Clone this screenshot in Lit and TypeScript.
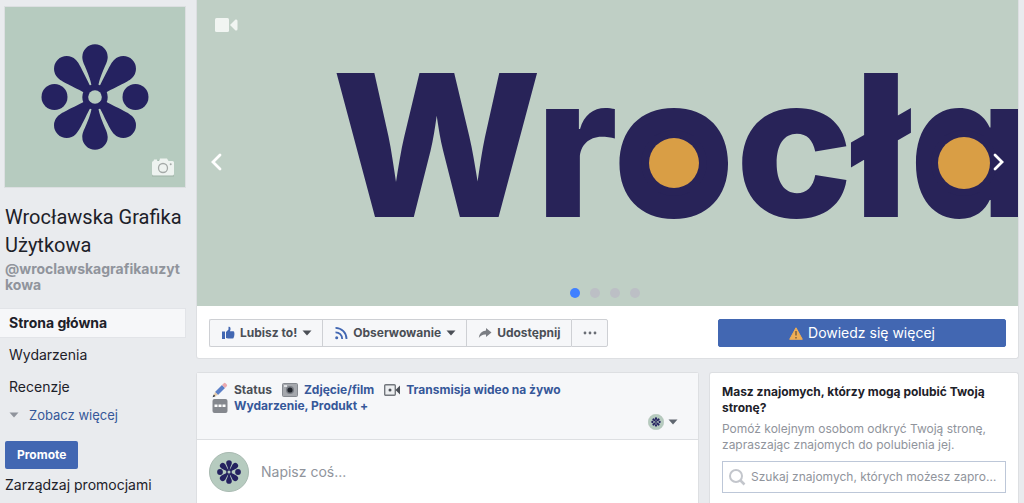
import { LitElement, html, css, svg } from "lit";
import { customElement } from "lit/decorators.js";

const PETAL = "M-12.7-40A12.7 12.7 0 0 1 12.7-40C12.7-33 6.500-27 3-10H-3C-6.500-27-12.7-33-12.7-40Z";
const SIDE_PETAL = "M-12.7-40A12.7 12.7 0 0 1 12.7-40C12.7-34 10-29 3.800-9H-3.800C-10-29-12.7-34-12.7-40Z";

const flower = svg`
  <g fill="#252260">
    <path d=${PETAL}></path>
    <path d=${PETAL} transform="rotate(180)"></path>
    <path d=${SIDE_PETAL} transform="rotate(45)"></path>
    <path d=${SIDE_PETAL} transform="rotate(135)"></path>
    <path d=${SIDE_PETAL} transform="rotate(225)"></path>
    <path d=${SIDE_PETAL} transform="rotate(315)"></path>
    <circle cx="-40.5" cy="0" r="13"></circle>
    <circle cx="40.5" cy="0" r="13"></circle>
    <circle cx="0" cy="0" r="12.7"></circle>
  </g>
  <circle cx="0" cy="0" r="6.8" fill="#b6cbbf"></circle>`;

const caret = html`<svg class="caret" width="10" height="6" viewBox="0 0 10 6" aria-hidden="true">
  <path d="M.5.5h9L5 5.500z" fill="currentColor"></path>
</svg>`;

@customElement("app-root")
export class AppRoot extends LitElement {
  static styles = css`
    :host {
      display: block;
      font-family: Inter, "Liberation Sans", sans-serif;
      font-size: 12px;
      line-height: 16px;
      color: #1d2129;
      background: #e9ebee;
      overflow: hidden;
    }
    * { box-sizing: border-box; }
    a { color: inherit; text-decoration: none; }
    button, input { font: inherit; color: inherit; margin: 0; }
    button { cursor: pointer; white-space: nowrap; }
    h1, h2, p { margin: 0; font-size: inherit; font-weight: inherit; }
    svg { display: block; flex: none; }
    .page { display: grid; grid-template-columns: 186px minmax(0, 1fr); gap: 10px; min-height: 100vh; padding-right: 5px; }
    .side { padding-top: 6px; }
    .portrait { width: 182px; margin-left: 4px; border: 1px solid #dcdfe1; }
    .portrait svg { width: 100%; height: auto; }
    .name { margin: 15px 0 2px 5px; font-family: Roboto, Inter, sans-serif; font-size: 20px; line-height: 28px; }
    .handle { display: block; margin: 0 6px 0 5px; font-size: 14px; font-weight: 700; color: #90949c; word-break: break-all; }
    .nav { margin-top: 15px; font-size: 14px; }
    .nav a { display: block; padding: 8px 9px; }
    .nav .current { background: #f6f7f9; border: 1px solid #e2e4e8; border-left: 0; padding: 6px 9px; margin-bottom: 1px; font-weight: 700; }
    .nav .more { display: flex; align-items: center; gap: 10px; padding: 4px 9px; font-size: 13px; color: #365899; }
    .more .caret { color: #90949c; }
    .promote { display: block; margin: 14px 0 8px 5px; height: 28px; padding: 0 12px; border: 0; border-radius: 2px; background: #4267b2; color: #fff; font-weight: 700; }
    .manage { display: block; margin-left: 5px; font-size: 14px; }

    .main { display: flex; flex-direction: column; gap: 13px; min-width: 0; }
    .card { background: #fff; border: 1px solid #dddfe2; border-radius: 3px; min-width: 0; }
    .hero { border-top: 0; border-radius: 0 0 3px 3px; }
    .cover { position: relative; }
    .cover svg.art { width: 100%; height: auto; }
    .lettering { font-family: Inter, sans-serif; font-weight: 800; font-size: 198px; font-feature-settings: "cv11"; fill: #282358; }
    .badge { position: absolute; left: 17px; top: 17px; }
    .arrow { position: absolute; top: 150px; width: 24px; height: 24px; padding: 0; border: 0; background: none; display: grid; place-items: center; }
    .prev { left: 7px; }
    .next { right: 8px; }
    .dots { position: absolute; left: 0; right: 6px; bottom: 8px; display: flex; justify-content: center; gap: 10px; }
    .dot { width: 10px; height: 10px; border: 0; padding: 0; border-radius: 50%; background: #bcbfc5; }
    .dot.on { background: #4080ff; }
    .actions { display: flex; justify-content: space-between; align-items: center; gap: 16px; padding: 13px 12px 11px; }
    .group { display: flex; }
    .group button { display: flex; align-items: center; height: 28px; padding: 0 10px 0 11px; gap: 5px; background: #f6f7f9; border: 1px solid #ced0d4; border-right-width: 0; color: #4b4f56; font-weight: 700; }
    .group button:first-child { border-radius: 2px 0 0 2px; }
    .group button:last-child { border-right-width: 1px; border-radius: 0 2px 2px 0; }
    .cta { display: flex; align-items: center; justify-content: center; gap: 5px; width: 288px; height: 28px; padding: 0; border: 1px solid #4267b2; border-radius: 2px; background: #4267b2; color: #fff; font-size: 14px; }

    .columns { flex: 1; display: grid; grid-template-columns: minmax(0, 1fr) 310px; gap: 10px; }
    .columns .card { border-bottom: 0; border-radius: 3px 3px 0 0; }
    .tools { background: #f6f7f9; border-bottom: 1px solid #dddfe2; padding: 9px 20px 9px 15px; }
    .kinds { display: flex; flex-wrap: wrap; column-gap: 10px; font-weight: 700; color: #365899; }
    .kinds a { display: flex; align-items: center; gap: 6px; white-space: nowrap; }
    .kinds .active { color: #4b4f56; }
    .as { display: flex; align-items: center; gap: 4px; margin: 0 0 0 auto; padding: 0; border: 0; background: none; color: #606770; }
    .write { display: flex; align-items: center; gap: 12px; padding: 12px; }
    .write input { flex: 1; min-width: 0; border: 0; padding: 0; outline: 0; font-size: 14px; line-height: 20px; background: none; }
    input::placeholder { color: #90949c; opacity: 1; }
    .invite { padding: 11px 12px; }
    .invite h2 { font-weight: 700; }
    .invite p { margin: 5px 0 8px; color: #90949c; }
    .search { display: flex; align-items: center; gap: 5px; height: 32px; padding: 0 6px 0 5px; border: 1px solid #bdc7d8; }
    .search input { flex: 1; min-width: 0; border: 0; padding: 0; outline: 0; background: none; text-overflow: ellipsis; }
  `;

  private avatar(size: number) {
    return html`<svg width=${size} height=${size} viewBox="-90 -90 180 180" aria-hidden="true">
      <circle cx="0" cy="0" r="88" fill="#b6cbbf" stroke="#a3b5ab" stroke-width="4"></circle>
      ${flower}
    </svg>`;
  }

  render() {
    return html`
      <div class="page">
        <aside class="side">
          <div class="portrait">
            <svg viewBox="-90 -90 180 180" role="img" aria-label="Logo">
              <rect x="-90" y="-90" width="180" height="180" fill="#b6cbbf"></rect>
              ${flower}
              <g transform="translate(57 62)">
                <path d="M1.500 2.500H5L7-.5h8L17 2.500h3.500A1.500 1.500 0 0 1 22 4v12.500H0V4a1.500 1.500 0 0 1 1.500-1.500z" transform="translate(0 1)" fill="#9db1a6"></path>
                <path d="M2 .5h3v1.500H7L8-.5h7L16.500 2H20.500A1.500 1.500 0 0 1 22 3.500V15a1.500 1.500 0 0 1-1.500 1.500h-19A1.500 1.500 0 0 1 0 15V3.500A1.500 1.500 0 0 1 1.500 2z" fill="#eef3f0"></path>
                <circle cx="11" cy="9" r="4.500" fill="none" stroke="#a5aaa8" stroke-width="1.300"></circle>
                <circle cx="18.700" cy="5.200" r="1" fill="#a5aaa8"></circle>
              </g>
            </svg>
          </div>
          <h1 class="name">Wrocławska Grafika Użytkowa</h1>
          <a class="handle" href="#">@wroclawskagrafikauzytkowa</a>
          <nav class="nav">
            <a class="current" href="#">Strona główna</a>
            <a href="#">Wydarzenia</a>
            <a href="#">Recenzje</a>
            <a class="more" href="#">${caret}Zobacz więcej</a>
          </nav>
          <button class="promote">Promote</button>
          <a class="manage" href="#">Zarządzaj promocjami</a>
        </aside>

        <main class="main">
          <section class="card hero">
            <div class="cover">
              <svg class="art" viewBox="0 0 821 306">
                <rect width="821" height="306" fill="#bfcfc5"></rect>
                <text class="lettering" x="135" y="217">Wrocła</text>
                <g fill="#282358">
                  <circle cx="477" cy="163" r="33"></circle>
                  <circle cx="767" cy="163" r="33"></circle>
                </g>
                <g fill="#d99e45">
                  <circle cx="477" cy="163" r="25"></circle>
                  <circle cx="767" cy="163" r="26"></circle>
                </g>
              </svg>
              <svg class="badge" width="24" height="16" viewBox="0 0 24 16" aria-hidden="true">
                <rect x="1" y="1" width="14" height="14" rx="1.500" fill="#f1f5f2"></rect>
                <path d="M16 8 21.500 2.500Q23.500 2 23.500 4v8q0 2-2 1.500z" fill="#f1f5f2"></path>
              </svg>
              <button class="arrow prev" aria-label="Poprzednie">
                <svg width="12" height="18" viewBox="0 0 12 18"><path d="M10 2 3 9l7 7" fill="none" stroke="#fff" stroke-width="2.800" stroke-linecap="round"></path></svg>
              </button>
              <button class="arrow next" aria-label="Następne">
                <svg width="12" height="18" viewBox="0 0 12 18"><path d="m3 2 7 7-7 7" fill="none" stroke="#fff" stroke-width="2.800" stroke-linecap="round"></path></svg>
              </button>
              <div class="dots">
                ${[1, 2, 3, 4].map((n) => html`<button class="dot ${n === 1 ? "on" : ""}" aria-label="Slajd ${n}"></button>`)}
              </div>
            </div>
            <div class="actions">
              <div class="group">
                <button>
                  <svg width="14" height="14" viewBox="0 0 14 14" aria-hidden="true"><path d="M1 5.500h3V13H1zM5 6l2.500-2.500V.8Q9.500 0 9.600 3L9 5.300h3.500q1.300.4.700 1.700.7 1 0 2 .4 1.200-.4 1.900.1 1.500-1.300 1.600H7L5 12z" fill="#4267b2"></path></svg>
                  Lubisz to! ${caret}
                </button>
                <button>
                  <svg width="14" height="14" viewBox="0 0 14 14" aria-hidden="true"><g fill="none" stroke="#4267b2" stroke-width="1.800"><path d="M1.500 1.800A11 11 0 0 1 12.500 13"></path><path d="M1.500 6.300A6.600 6.600 0 0 1 8.200 13"></path></g><circle cx="2.700" cy="11.700" r="1.500" fill="#4267b2"></circle></svg>
                  Obserwowanie ${caret}
                </button>
                <button>
                  <svg width="14" height="12" viewBox="0 0 14 12" aria-hidden="true"><path d="M8 1l5.500 4.500L8 10V7.500Q3.500 7 .8 11 1.500 4 8 3.500z" fill="#7a7d83"></path></svg>
                  Udostępnij
                </button>
                <button aria-label="Więcej">
                  <svg width="14" height="4" viewBox="0 0 14 4" aria-hidden="true"><g fill="#6a6e75"><circle cx="2" cy="2" r="1.400"></circle><circle cx="7" cy="2" r="1.400"></circle><circle cx="12" cy="2" r="1.400"></circle></g></svg>
                </button>
              </div>
              <button class="cta">
                <svg width="14" height="13" viewBox="0 0 14 13" aria-hidden="true"><path d="M7 .8 13.300 12.300H.7z" fill="#f0ae55" stroke="#f0ae55" stroke-linejoin="round"></path><path d="M7 4v4.500M7 10v1.500" stroke="#80603a" stroke-width="1.500"></path></svg>
                Dowiedz się więcej
              </button>
            </div>
          </section>

          <div class="columns">
            <section class="card">
              <div class="tools">
                <div class="kinds">
                  <a class="active" href="#">
                    <svg width="16" height="16" viewBox="0 0 16 16" aria-hidden="true"><path d="M3 10 10 3l3 3-7 7z" fill="#5b7fc7"></path><path d="m10 3 1.800-1.800q1-.8 2 .2l.8.800q1 1 .2 2L13 6z" fill="#eba9ae"></path><path d="m3 10 3 3-4.500 1.500z" fill="#e5c9a6"></path><path d="m1.800 12.500 1.700 1.700L.5 15.300z" fill="#30343b"></path></svg>
                    Status</a>
                  <a href="#">
                    <svg width="16" height="16" viewBox="0 0 16 16" aria-hidden="true"><rect x=".5" y="1.500" width="15" height="13" rx="1" fill="#a5a8ad" stroke="#85898f"></rect><rect x="2" y="3" width="3" height="2" fill="#dfe1e4"></rect><circle cx="8" cy="8" r="4" fill="#7a7e85"></circle><circle cx="8" cy="8" r="2.600" fill="#22262d"></circle></svg>
                    Zdjęcie/film</a>
                  <a href="#">
                    <svg width="16" height="16" viewBox="0 0 16 16" aria-hidden="true"><rect x=".7" y="2.700" width="10.600" height="10.600" rx="1" fill="#eceef0" stroke="#73777d" stroke-width="1.400"></rect><circle cx="6" cy="8" r="1.500" fill="#4b4f56"></circle><path d="M11.500 8 16 3.500v9z" fill="#4b4f56"></path></svg>
                    Transmisja wideo na żywo</a>
                  <a href="#">
                    <svg width="16" height="16" viewBox="0 0 16 16" aria-hidden="true"><rect x=".5" y="1" width="15" height="14" rx="2" fill="#85888e"></rect><path d="M2.500 6.500h3v2.500h-3zm4 0h3v2.500h-3zm4 0h3v2.500h-3z" fill="#fff"></path></svg>
                    Wydarzenie, Produkt +</a>
                </div>
                <button class="as" aria-label="Publikuj jako">${this.avatar(16)}${caret}</button>
              </div>
              <div class="write">${this.avatar(40)}<input aria-label="Nowy post" placeholder="Napisz coś..." /></div>
            </section>

            <section class="card invite">
              <h2>Masz znajomych, którzy mogą polubić Twoją stronę?</h2>
              <p>Pomóż kolejnym osobom odkryć Twoją stronę, zapraszając znajomych do polubienia jej.</p>
              <label class="search">
                <svg width="18" height="18" viewBox="0 0 18 18" aria-hidden="true"><circle cx="8" cy="8" r="6" fill="none" stroke="#c3c6cc" stroke-width="2"></circle><path d="m12.500 12.500 4 4" stroke="#c3c6cc" stroke-width="2.500"></path></svg>
                <input aria-label="Szukaj znajomych" placeholder="Szukaj znajomych, których możesz zaprosić do polubienia tej strony" />
              </label>
            </section>
          </div>
        </main>
      </div>
    `;
  }
}
